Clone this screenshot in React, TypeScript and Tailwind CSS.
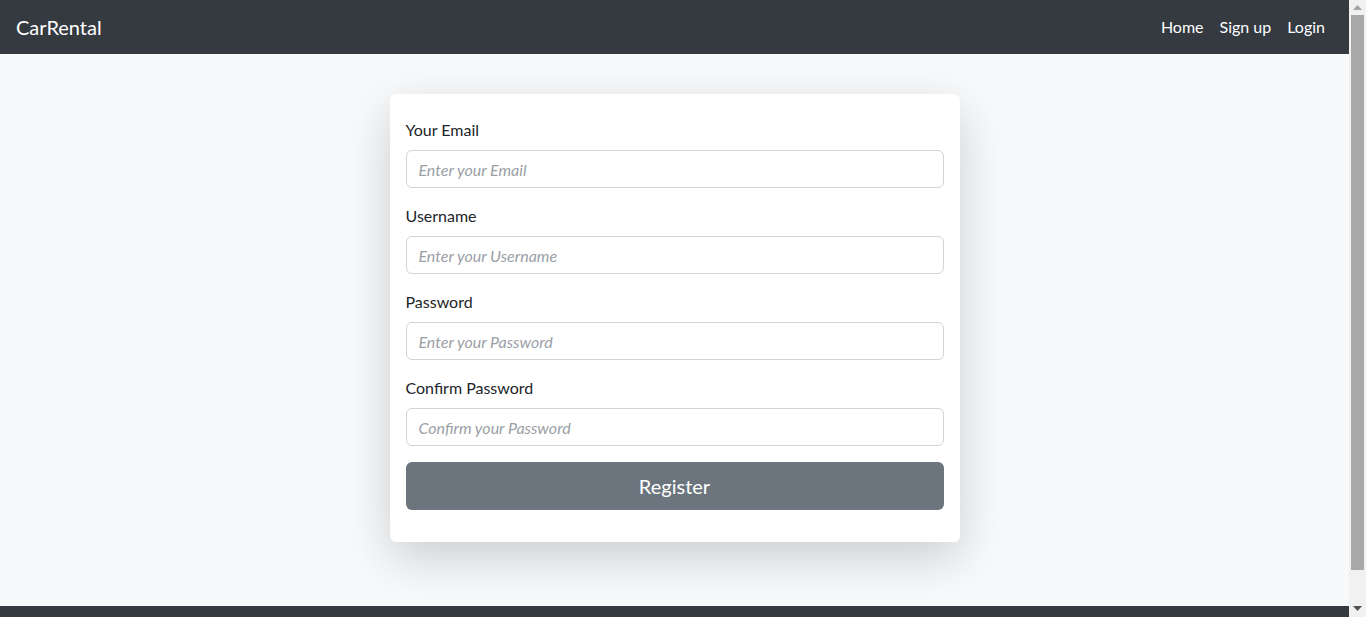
import React from "react";

const fields = [
  { label: "Your Email", placeholder: "Enter your Email", type: "email" },
  { label: "Username", placeholder: "Enter your Username", type: "text" },
  { label: "Password", placeholder: "Enter your Password", type: "password" },
  { label: "Confirm Password", placeholder: "Confirm your Password", type: "password" },
];

function Scrollbar() {
  return (
    <div className="w-[17px] shrink-0 h-screen bg-[#f1f1f1] flex flex-col">
      <div className="h-[15px] flex items-center justify-center">
        <svg width="9" height="5" viewBox="0 0 9 5"><polygon points="0,5 9,5 4.5,0" fill="#a3a3a3" /></svg>
      </div>
      <div className="flex-1 px-[2px] pt-0 pb-[30px]">
        <div className="h-full bg-[#a8a8a8]" />
      </div>
      <div className="h-[17px] flex items-center justify-center">
        <svg width="9" height="5" viewBox="0 0 9 5"><polygon points="0,0 9,0 4.5,5" fill="#505050" /></svg>
      </div>
    </div>
  );
}

export default function App() {
  return (
    <div
      className="h-screen overflow-hidden flex bg-[#f8f9fa] text-[#212529]"
      style={{ fontFamily: "Lato, 'Noto Sans', sans-serif" }}
    >
      <div className="flex-1 flex flex-col min-w-0">
        <nav className="h-[54px] shrink-0 bg-[#343a40] flex items-center justify-between px-4">
          <a className="text-white text-[20px] leading-[30px]" href="#">CarRental</a>
          <div className="flex items-center">
            <a className="text-white text-[16px] px-2 leading-6" href="#">Home</a>
            <a className="text-white text-[16px] px-2 leading-6" href="#">Sign up</a>
            <a className="text-white text-[16px] px-2 leading-6" href="#">Login</a>
          </div>
        </nav>
        <main className="h-[552px] shrink-0 flex justify-center pt-10">
          <div className="w-[570px] h-[448px] bg-white rounded-md shadow-[0_1rem_3rem_rgba(0,0,0,0.175)] px-4 pt-6 pb-8">
            {fields.map((f) => (
              <div key={f.label} className="mb-4">
                <label className="block text-[16px] leading-6 mb-2">{f.label}</label>
                <input
                  type={f.type}
                  placeholder={f.placeholder}
                  className="block w-full h-[38px] border border-[#ced4da] rounded-md px-3 text-[16px] bg-white outline-none placeholder:italic placeholder:text-[#9aa0a6]"
                />
              </div>
            ))}
            <button className="w-full h-12 rounded-md bg-[#6c757d] text-white text-[20px]">Register</button>
          </div>
        </main>
        <footer className="h-[42px] shrink-0 bg-[#343a40]" />
      </div>
      <Scrollbar />
    </div>
  );
}
